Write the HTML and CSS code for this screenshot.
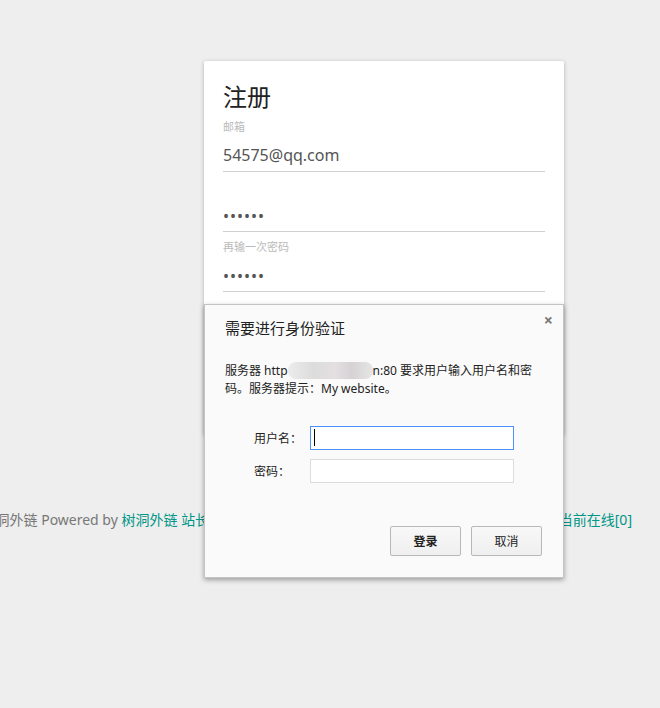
FILE: index.html
```html
<!DOCTYPE html>
<html lang="zh-CN">
<head>
    <meta charset="UTF-8">
    <meta name="viewport" content="width=device-width, initial-scale=1.0">
    <title>注册</title>
    <link rel="stylesheet" href="styles.css">
</head>
<body>
    <div class="card">
        <h2 class="card-title">注册</h2>
        <div class="field">
            <label class="field-label">邮箱</label>
            <input class="field-input" type="text" value="54575@qq.com">
        </div>
        <div class="field">
            <label class="field-label"></label>
            <input class="field-input pwd" type="password" value="123456">
        </div>
        <div class="field">
            <label class="field-label">再输一次密码</label>
            <input class="field-input pwd" type="password" value="123456">
        </div>
        <button class="submit" type="button">注册</button>
    </div>

    <div class="footer">
        <span>© 2018 树洞外链 Powered by <a href="#">树洞外链</a> <a href="#">站长统计</a> | 累计上传数[0] | 今日上传文件[0] | 今日访问[0] | <a href="#">当前在线[0]</a></span>
    </div>

    <div class="auth-dialog">
        <span class="close">×</span>
        <div class="auth-title">需要进行身份验证</div>
        <p class="auth-msg">服务器 http<span class="blur"></span>n:80 要求用户输入用户名和密码。服务器提示：My website。</p>
        <div class="auth-form">
            <label>用户名：</label>
            <div class="input-wrap">
                <input class="auth-input focused" type="text">
                <span class="caret"></span>
            </div>
            <label>密码：</label>
            <input class="auth-input" type="password">
        </div>
        <div class="auth-buttons">
            <button class="btn btn-primary" type="button">登录</button>
            <button class="btn" type="button">取消</button>
        </div>
    </div>
</body>
</html>
```

FILE: styles.css
```css
body {
    margin: 0;
    background-color: #eeeeee;
    font-family: "Noto Sans", "Noto Sans CJK SC", sans-serif;
    color: #333;
    overflow: hidden;
}
.card {
    width: 360px;
    box-sizing: border-box;
    margin: 61px 0 0 204px;
    padding: 20px 19px 143px;
    background: #fff;
    border-radius: 2px;
    box-shadow: 0 1px 4px rgba(0, 0, 0, 0.25);
}
.card-title {
    margin: 0;
    font-size: 24px;
    font-weight: normal;
    line-height: 32px;
    color: #222;
}
.field {
    margin-top: 6px;
}
.field + .field {
    margin-top: 7px;
}
.field-label {
    display: block;
    height: 16px;
    font-size: 11px;
    line-height: 16px;
    color: #bbb;
}
.field-input {
    display: block;
    width: 100%;
    height: 37px;
    box-sizing: border-box;
    padding: 4px 0 0;
    border: none;
    border-bottom: 1px solid #d0d0d0;
    outline: none;
    font-family: "Noto Sans", "Noto Sans CJK SC", sans-serif;
    font-size: 16px;
    color: #555;
    background: transparent;
}
.field-input.pwd {
    letter-spacing: 1px;
    padding-top: 6px;
}
.submit {
    display: none;
}
.footer {
    display: flex;
    justify-content: flex-end;
    margin-top: 75px;
    padding-right: 28px;
    white-space: nowrap;
    font-size: 14px;
    line-height: 20px;
    color: #777;
}
.footer a {
    color: #009688;
    text-decoration: none;
}
.auth-dialog {
    position: absolute;
    left: 204px;
    top: 304px;
    width: 360px;
    height: 274px;
    box-sizing: border-box;
    padding: 13px 20px 21px;
    display: flex;
    flex-direction: column;
    background: #fafafa;
    border: 1px solid #c4c4c4;
    box-shadow: 0 2px 5px rgba(0, 0, 0, 0.35);
    font-family: "Noto Sans", "Noto Sans CJK SC", sans-serif;
    color: #222;
}
.close {
    position: absolute;
    right: 10px;
    top: 4px;
    font-size: 16px;
    font-weight: bold;
    color: #777;
}
.auth-title {
    font-size: 15px;
    line-height: 20px;
}
.auth-msg {
    margin: 24px 0 0;
    font-size: 12px;
    line-height: 18px;
}
.blur {
    display: inline-block;
    width: 85px;
    height: 17px;
    vertical-align: -4px;
    border-radius: 8px;
    background: linear-gradient(90deg, #ececec, #dcdcdc 30%, #e4dfe2 55%, #d6d2d4 75%, #e6e6e6);
}
.auth-form {
    display: grid;
    grid-template-columns: 56px 204px;
    row-gap: 9px;
    align-items: center;
    margin-top: 28px;
    padding-left: 29px;
    font-size: 12px;
}
.input-wrap {
    position: relative;
}
.auth-input {
    display: block;
    width: 204px;
    height: 24px;
    box-sizing: border-box;
    border: 1px solid #dcdcdc;
    background: #fff;
    outline: none;
}
.auth-input.focused {
    border-color: #4d90fe;
}
.caret {
    position: absolute;
    left: 4px;
    top: 3px;
    width: 1px;
    height: 17px;
    background: #000;
}
.auth-buttons {
    display: flex;
    justify-content: flex-end;
    gap: 10px;
    margin-top: auto;
    padding-right: 1px;
}
.btn {
    width: 71px;
    height: 30px;
    border: 1px solid #b8b8b8;
    border-radius: 2px;
    background: linear-gradient(#f8f8f8, #efefef);
    font-family: "Noto Sans", "Noto Sans CJK SC", sans-serif;
    font-size: 12px;
    color: #222;
}
.btn-primary {
    font-weight: bold;
}
```
